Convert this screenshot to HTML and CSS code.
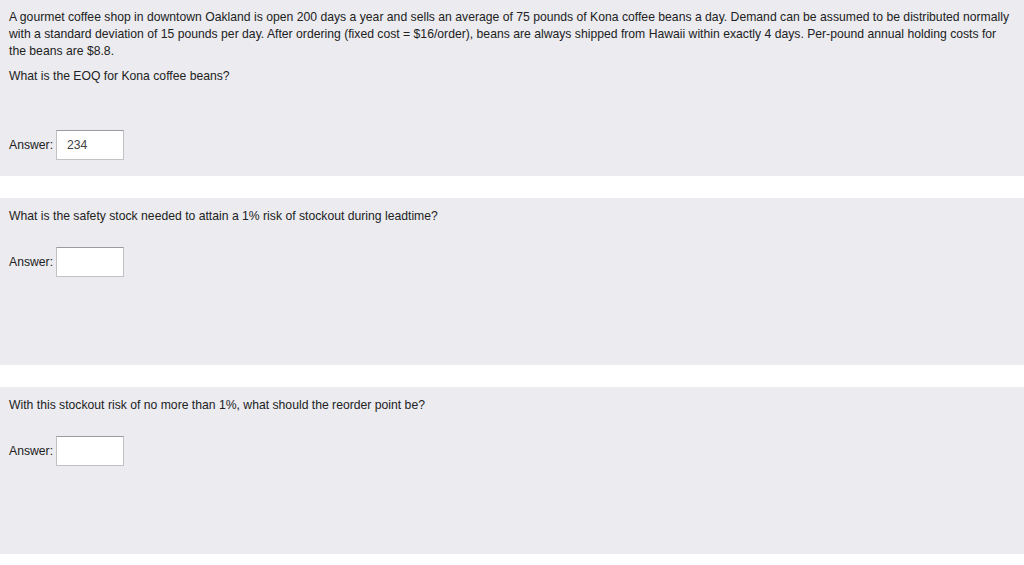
FILE: index.html
```html
<!DOCTYPE html>
<html>
<head>
<meta charset="utf-8">
<link rel="stylesheet" href="styles.css">
</head>
<body>
<div class="page">
  <section class="panel panel-first">
    <p class="text">A gourmet coffee shop in downtown Oakland is open 200 days a year and sells an average of 75 pounds of Kona coffee beans a day. Demand can be assumed to be distributed normally with a standard deviation of 15 pounds per day. After ordering (fixed cost = $16/order), beans are always shipped from Hawaii within exactly 4 days. Per-pound annual holding costs for the beans are $8.8.</p>
    <p class="text q">What is the EOQ for Kona coffee beans?</p>
    <div class="answer answer-first">
      <span class="label">Answer:</span>
      <span class="box">234</span>
    </div>
  </section>
  <section class="panel">
    <p class="text">What is the safety stock needed to attain a 1% risk of stockout during leadtime?</p>
    <div class="answer">
      <span class="label">Answer:</span>
      <span class="box"></span>
    </div>
  </section>
  <section class="panel">
    <p class="text">With this stockout risk of no more than 1%, what should the reorder point be?</p>
    <div class="answer">
      <span class="label">Answer:</span>
      <span class="box"></span>
    </div>
  </section>
</div>
</body>
</html>
```

FILE: styles.css
```css
html, body {
  margin: 0;
  padding: 0;
  background: #ffffff;
}
body {
  font-family: "Liberation Sans", Arial, sans-serif;
  font-size: 12.2px;
  color: #222222;
}
.page {
  display: flex;
  flex-direction: column;
  gap: 22px;
}
.panel {
  background: #ebebf0;
  height: 167px;
  box-sizing: border-box;
  padding: 10px 12px 0 9px;
}
.panel-first {
  height: 176px;
  padding-top: 9px;
}
.text {
  margin: 0;
  line-height: 17px;
}
.q {
  margin-top: 8px;
}
.answer {
  display: flex;
  align-items: center;
  gap: 3px;
  margin-top: 22px;
}
.answer-first {
  margin-top: 45px;
}
.label {
  color: #222222;
}
.box {
  display: block;
  width: 56px;
  height: 28px;
  line-height: 28px;
  padding: 0 0 0 10px;
  background: #ffffff;
  border: 1px solid #c2c2c6;
  border-top-color: #9a9aa0;
  color: #444444;
}
```
